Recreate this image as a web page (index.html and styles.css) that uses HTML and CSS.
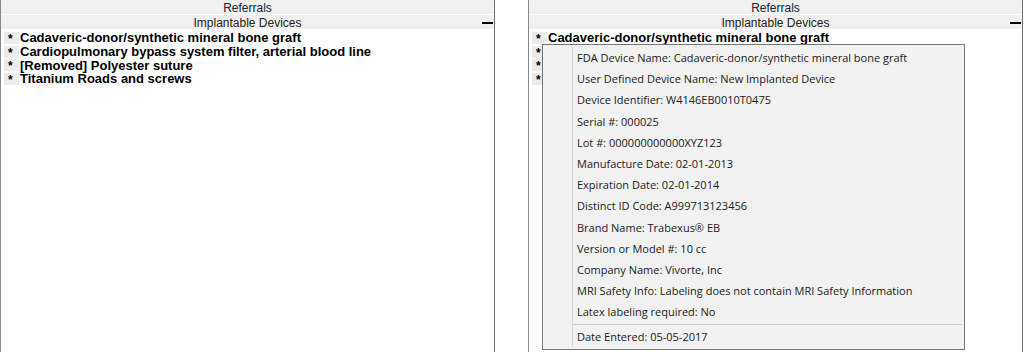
FILE: index.html
```html
<!DOCTYPE html>
<html lang="en">
<head>
  <meta charset="UTF-8" />
  <title>Implantable Devices</title>
  <link rel="stylesheet" href="styles.css">
</head>
<body>
  <div class="panel">
    <div class="hdr">Referrals</div>
    <div class="hdr sub">Implantable Devices <span class="minus"></span></div>
    <ul class="devices">
      <li><span class="star">*</span>Cadaveric-donor/synthetic mineral bone graft</li>
      <li><span class="star">*</span>Cardiopulmonary bypass system filter, arterial blood line</li>
      <li><span class="star">*</span>[Removed] Polyester suture</li>
      <li><span class="star">*</span>Titanium Roads and screws</li>
    </ul>
  </div>

  <div class="panel">
    <div class="hdr">Referrals</div>
    <div class="hdr sub">Implantable Devices <span class="minus"></span></div>
    <!-- rows under the tooltip only show their marker -->
    <ul class="devices">
      <li><span class="star">*</span>Cadaveric-donor/synthetic mineral bone graft</li>
      <li><span class="star">*</span></li>
      <li><span class="star">*</span></li>
      <li><span class="star">*</span></li>
    </ul>

    <div class="tip">
      <div class="tip-body">
        <div class="tip-row">FDA Device Name: Cadaveric-donor/synthetic mineral bone graft</div>
        <div class="tip-row">User Defined Device Name: New Implanted Device</div>
        <div class="tip-row">Device Identifier: W4146EB0010T0475</div>
        <div class="tip-row">Serial #: 000025</div>
        <div class="tip-row">Lot #: 000000000000XYZ123</div>
        <div class="tip-row">Manufacture Date: 02-01-2013</div>
        <div class="tip-row">Expiration Date: 02-01-2014</div>
        <div class="tip-row">Distinct ID Code: A999713123456</div>
        <div class="tip-row">Brand Name: Trabexus® EB</div>
        <div class="tip-row">Version or Model #: 10 cc</div>
        <div class="tip-row">Company Name: Vivorte, Inc</div>
        <div class="tip-row">MRI Safety Info: Labeling does not contain MRI Safety Information</div>
        <div class="tip-row">Latex labeling required: No</div>
        <hr class="tip-sep">
        <div class="tip-row last">Date Entered: 05-05-2017</div>
      </div>
    </div>
  </div>
</body>
</html>
```

FILE: styles.css
```css
body {
  margin: 0;
  background: #ffffff;
  font-family: 'Liberation Sans', Arial, sans-serif;
  display: flex;
  gap: 33px;
  overflow: hidden;
  height: 352px;
}

.panel {
  position: relative;
  width: 493px;
  height: 352px;
  border-left: 1px solid #8a8a8a;
  border-right: 1px solid #6e6e6e;
}

.hdr {
  position: relative;
  height: 13px;
  padding-top: 1px;
  line-height: 14px;
  margin-bottom: 1px;
  background: #f0f0f0;
  color: #222;
  font-size: 12px;
  text-align: center;
}

.minus {
  position: absolute;
  right: 1px;
  top: 7px;
  width: 11px;
  height: 2px;
  background: #000;
}

.devices {
  list-style: none;
  margin: 2px 0 0;
  padding: 0;
}

.devices li {
  display: flex;
  align-items: center;
  height: 13.7px;
  font-size: 13px;
  font-weight: bold;
  color: #000;
  white-space: nowrap;
}

.star {
  width: 15px;
  height: 12px;
  margin: 0 1px 0 3px;
  padding-left: 4px;
  box-sizing: border-box;
  background: #ececec;
  line-height: 14px;
  font-size: 12px;
}

.tip {
  position: absolute;
  left: 13px;
  top: 44px;
  width: 417px;
  padding: 2px;
  background: #f2f2f2;
  border: 1px solid #777;
  font-family: 'Open Sans', 'Noto Sans', sans-serif;
  font-size: 11px;
  color: #1a1a1a;
}

.tip-body {
  margin-left: 27px;
  border-left: 1px solid #d4d4d4;
}

.tip-row {
  height: 21.2px;
  line-height: 21.2px;
  padding-left: 4px;
  white-space: nowrap;
}

.tip-row.last {
  height: 21px;
  line-height: 21px;
}

.tip-sep {
  margin: 2px 0 1px;
  border: none;
  border-top: 1px solid #cacaca;
}
```
